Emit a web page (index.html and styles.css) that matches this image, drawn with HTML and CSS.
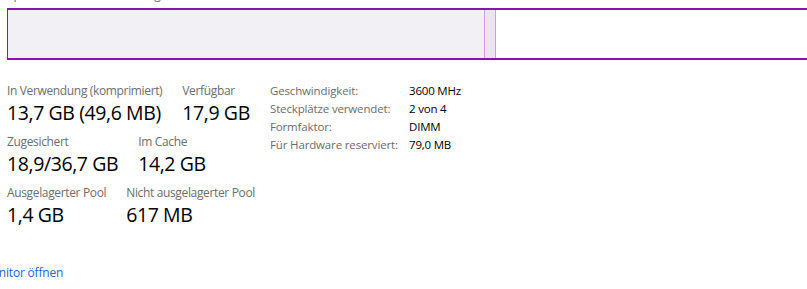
FILE: index.html
```html
<!DOCTYPE html>
<html lang="de">
<head>
	<meta charset="UTF-8">
	<title>Arbeitsspeicher</title>
	<link rel="stylesheet" href="styles.css">
</head>
<body>
	<div class="composition">
		<span class="caption">Speicherzusammensetzung</span>
		<div class="bar">
			<div class="bar-used"></div>
			<div class="bar-standby"></div>
		</div>
	</div>

	<div class="details">
		<div class="stats">
			<div class="stat-row">
				<div class="stat">
					<span class="stat-label">In Verwendung (komprimiert)</span>
					<span class="stat-value">13,7 GB (49,6 MB)</span>
				</div>
				<div class="stat">
					<span class="stat-label">Verfügbar</span>
					<span class="stat-value">17,9 GB</span>
				</div>
			</div>
			<div class="stat-row">
				<div class="stat">
					<span class="stat-label">Zugesichert</span>
					<span class="stat-value">18,9/36,7 GB</span>
				</div>
				<div class="stat">
					<span class="stat-label">Im Cache</span>
					<span class="stat-value">14,2 GB</span>
				</div>
			</div>
			<div class="stat-row">
				<div class="stat">
					<span class="stat-label">Ausgelagerter Pool</span>
					<span class="stat-value">1,4 GB</span>
				</div>
				<div class="stat">
					<span class="stat-label">Nicht ausgelagerter Pool</span>
					<span class="stat-value">617 MB</span>
				</div>
			</div>
		</div>

		<dl class="specs">
			<dt>Geschwindigkeit:</dt><dd>3600 MHz</dd>
			<dt>Steckplätze verwendet:</dt><dd>2 von 4</dd>
			<dt>Formfaktor:</dt><dd>DIMM</dd>
			<dt>Für Hardware reserviert:</dt><dd>79,0 MB</dd>
		</dl>
	</div>

	<a class="monitor-link" href="#">Ressourcenmonitor öffnen</a>
</body>
</html>
```
FILE: styles.css
```css
*, *:after, *:before { box-sizing: border-box; }
html, body { margin: 0; padding: 0; background: #fff; overflow: hidden; }
body { width: 807px; height: 289px; font-family: "Open Sans", "Noto Sans", sans-serif; font-size: 12px; color: #000; }

/* composition bar */
.composition { padding-left: 7px; margin-top: -14px; }
.caption { display: block; height: 22px; line-height: 17px; color: #6d6d6d; }
.bar { display: flex; width: 830px; height: 52px; border: 2px solid #8b12ae; border-right: 0; border-left-width: 1px; }
.bar-used { width: 476px; background: #f2f0f4; }
.bar-standby { width: 12px; background: #ede4f1; border-left: 1px solid #c9a2dc; border-right: 1px solid #c9a2dc; }

/* details */
.details { display: flex; align-items: flex-start; padding: 22px 0 0 7px; }
.stats { width: 263px; display: flex; flex-direction: column; gap: 7px; }
.stat-row { display: flex; gap: 20px; }
.stat { display: flex; flex-direction: column; }
.stat-label { color: #6d6d6d; line-height: 18px; font-size: 12px; letter-spacing: -0.35px; }
.stat-value { font-size: 19.5px; line-height: 26px; letter-spacing: -0.4px; }

.specs { display: grid; grid-template-columns: 139px auto; margin: 0; line-height: 18px; font-size: 11.5px; }
.specs dt { color: #6d6d6d; letter-spacing: -0.15px; }
.specs dd { margin: 0; letter-spacing: -0.2px; }

/* link */
.monitor-link { display: block; margin: 36px 0 0 -82px; color: #1a66cc; text-decoration: none; font-size: 12px; letter-spacing: -0.2px; }
```
